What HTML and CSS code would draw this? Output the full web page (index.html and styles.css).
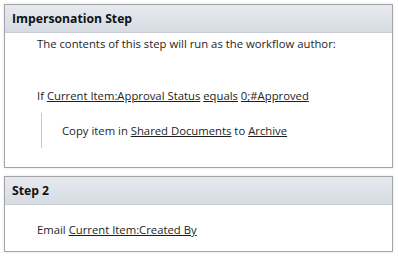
FILE: index.html
```html
<!DOCTYPE html>
<html lang="en">
<head>
    <meta charset="UTF-8">
    <title>Workflow Steps</title>
    <link rel="stylesheet" href="styles.css">
</head>
<body>
    <div class="step">
        <div class="step-header">Impersonation Step</div>
        <div class="step-body">
            <p class="note">The contents of this step will run as the workflow author:</p>
            <p class="condition">If <a href="#">Current Item:Approval Status</a> <a href="#">equals</a> <a href="#">0;#Approved</a></p>
            <div class="branch">
                <p>Copy item in <a href="#">Shared Documents</a> to <a href="#">Archive</a></p>
            </div>
        </div>
    </div>

    <div class="step">
        <div class="step-header">Step 2</div>
        <div class="step-body">
            <p class="action">Email <a href="#">Current Item:Created By</a></p>
        </div>
    </div>
</body>
</html>
```

FILE: styles.css
```css
body {
    font-family: "Open Sans", "Noto Sans", sans-serif;
    font-size: 11.3px;
    line-height: 16px;
    color: #1e1e1e;
    background-color: #ffffff;
    margin: 0;
    padding: 4px 5px 0 4px;
}
p {
    margin: 0;
}
a {
    color: #1e1e1e;
    text-decoration: underline;
}
.step {
    border: 1px solid #a3a3a3;
    box-shadow: 0 0 3px rgba(0, 0, 0, 0.12);
    margin-bottom: 8px;
}
.step-header {
    height: 27px;
    line-height: 27px;
    padding-left: 7px;
    font-size: 12.2px;
    font-weight: bold;
    color: #111;
    background: linear-gradient(#e7e9ee, #dde1e8 60%, #d6dbe2);
    border-bottom: 1px solid #c9ced6;
}
.step-body {
    padding: 3px 0 0 32px;
}
.note {
    height: 16px;
}
.condition {
    margin-top: 36px;
}
.branch {
    margin: 9px 0 19px 4px;
    border-left: 1px solid #c8c8c8;
    padding: 10px 0 9px 20px;
}
.action {
    margin: 14px 0 13px 0;
}
```
